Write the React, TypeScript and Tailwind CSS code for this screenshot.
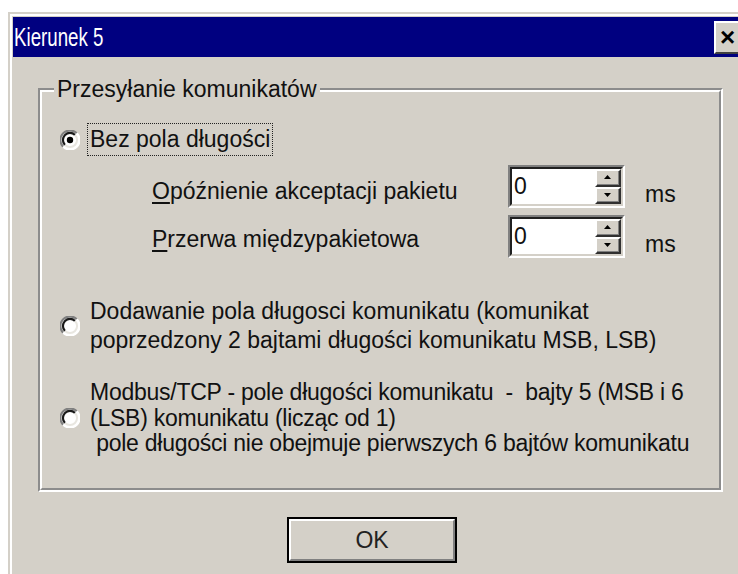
import React from "react";

const body = { fontFamily: '"Liberation Sans", Arial, sans-serif' };

function Radio({ checked }: { checked?: boolean }) {
  return (
    <span className="relative inline-block h-[20px] w-[20px] shrink-0 rounded-full bg-white">
      <svg width="20" height="20" viewBox="0 0 20 20" className="absolute left-0 top-0">
        <path d="M3.2 16.8 A9.5 9.5 0 0 1 16.8 3.2" fill="none" stroke="#808080" strokeWidth="2" />
        <path d="M5 15 A7 7 0 0 1 15 5" fill="none" stroke="#1a1a1a" strokeWidth="2.2" />
        <path d="M16.8 3.2 A9.5 9.5 0 0 1 3.2 16.8" fill="none" stroke="#ffffff" strokeWidth="2" />
        <path d="M15 5 A7 7 0 0 1 5 15" fill="none" stroke="#e8e6e0" strokeWidth="2" />
        {checked && <circle cx="10" cy="10" r="3.2" fill="#000" />}
      </svg>
    </span>
  );
}

function Spin({ value }: { value: string }) {
  return (
    <div className="flex h-[43px] w-[117px] border-t-2 border-l-2 border-t-[#808080] border-l-[#808080] border-b-2 border-r-2 border-b-white border-r-white">
      <div className="flex flex-1 border-t-2 border-l-2 border-t-[#202020] border-l-[#202020] border-b-2 border-r-2 border-b-[#d4d0c8] border-r-[#d4d0c8] bg-white">
        <div className="flex-1 pl-[2px] pt-[4px] text-[23px] leading-[26px] text-[#111]">{value}</div>
        <div className="flex w-[26px] flex-col">
          <SpinButton dir="up" />
          <SpinButton dir="down" />
        </div>
      </div>
    </div>
  );
}

function SpinButton({ dir }: { dir: "up" | "down" }) {
  return (
    <div className="flex flex-1 border-t-2 border-l-2 border-t-white border-l-white border-b-2 border-r-2 border-b-[#303030] border-r-[#303030] bg-[#d4d0c8]">
      <div className="flex flex-1 items-center justify-center border-b border-r border-[#808080]">
        <svg width="7" height="4" viewBox="0 0 7 4">
          {dir === "up" ? <path d="M3.5 0 L7 4 L0 4 Z" fill="#000" /> : <path d="M0 0 L7 0 L3.5 4 Z" fill="#000" />}
        </svg>
      </div>
    </div>
  );
}

export default function App() {
  return (
    <div className="h-[574px] w-[738px] overflow-hidden bg-white" style={body}>
      <div className="ml-[8px] mt-[12px] w-[760px] border-t-2 border-l-2 border-[#d4d0c8]">
        <div className="border-t-2 border-l-2 border-white">
          <div className="border-t border-l border-[#d4d0c8] bg-[#d4d0c8]">
            {/* title bar */}
            <div className="flex h-[40px] items-center justify-between bg-[#000080] pl-[1px] pr-[20px]">
              <span className="inline-block origin-left scale-x-[0.72] text-[26px] leading-[40px] text-white">
                Kierunek 5
              </span>
              <div className="flex h-[33px] w-[34px] items-center border-t-2 border-l-2 border-t-white border-l-white border-b-2 border-r-2 border-b-[#404040] border-r-[#404040] bg-[#d4d0c8] pl-[4px]">
                <span className="text-[26px] font-bold leading-none text-black">×</span>
              </div>
            </div>

            {/* client area */}
            <div className="h-[520px] pl-[25px] pt-[31px]">
              <div className="relative h-[404px] w-[685px] border-t-2 border-l-2 border-t-[#8c8c8c] border-l-[#8c8c8c] border-b-2 border-r-2 border-b-white border-r-white">
                <div className="h-full border-t-2 border-l-2 border-t-white border-l-white border-b-2 border-r-2 border-b-[#8c8c8c] border-r-[#8c8c8c]">
                  <span className="absolute left-[14px] top-[-14px] bg-[#d4d0c8] px-[3px] text-[23px] leading-[26px] text-[#111]">
                    Przesyłanie komunikatów
                  </span>

                  <div className="flex flex-col pl-[18px] text-[23px] text-[#111]">
                    {/* option 1 */}
                    <div className="mt-[31px] flex items-center">
                      <Radio checked />
                      <span className="ml-[7px] border border-dotted border-[#222] px-[2px] py-[3px] leading-[25px]">
                        Bez pola długości
                      </span>
                    </div>

                    <div className="ml-[92px] mt-[9px] flex h-[43px] items-center">
                      <span className="mt-[8px] w-[356px] leading-[26px]">
                        <span className="underline underline-offset-[3px]">O</span>późnienie akceptacji pakietu
                      </span>
                      <Spin value="0" />
                      <span className="ml-[20px] mt-[14px] leading-[26px]">ms</span>
                    </div>

                    <div className="ml-[92px] mt-[7px] flex h-[43px] items-center">
                      <span className="mt-[4px] w-[356px] leading-[26px]">
                        <span className="underline underline-offset-[3px]">P</span>rzerwa międzypakietowa
                      </span>
                      <Spin value="0" />
                      <span className="ml-[20px] mt-[14px] leading-[26px]">ms</span>
                    </div>

                    {/* option 2 */}
                    <div className="mt-[39px] flex items-center">
                      <Radio />
                      <div className="ml-[10px] leading-[29px]">
                        <div>Dodawanie pola długosci komunikatu (komunikat</div>
                        <div>poprzedzony 2 bajtami długości komunikatu MSB, LSB)</div>
                      </div>
                    </div>

                    {/* option 3 */}
                    <div className="mt-[25px] flex items-center">
                      <Radio />
                      <div className="ml-[10px] leading-[25.5px] tracking-[-0.25px]">
                        <div>Modbus/TCP - pole długości komunikatu&nbsp; - &nbsp;bajty 5 (MSB i 6</div>
                        <div>(LSB) komunikatu (licząc od 1)</div>
                        <div>&nbsp;pole długości nie obejmuje pierwszych 6 bajtów komunikatu</div>
                      </div>
                    </div>
                  </div>
                </div>
              </div>

              {/* OK button */}
              <div className="ml-[249px] mt-[25px] flex h-[46px] w-[170px] border-2 border-[#000]">
                <div className="flex flex-1 border-t-2 border-l-2 border-t-white border-l-white border-b-2 border-r-2 border-b-[#808080] border-r-[#808080] bg-[#d4d0c8]">
                  <div className="flex flex-1 items-center justify-center text-[23px] text-[#222]">OK</div>
                </div>
              </div>
            </div>
          </div>
        </div>
      </div>
    </div>
  );
}
